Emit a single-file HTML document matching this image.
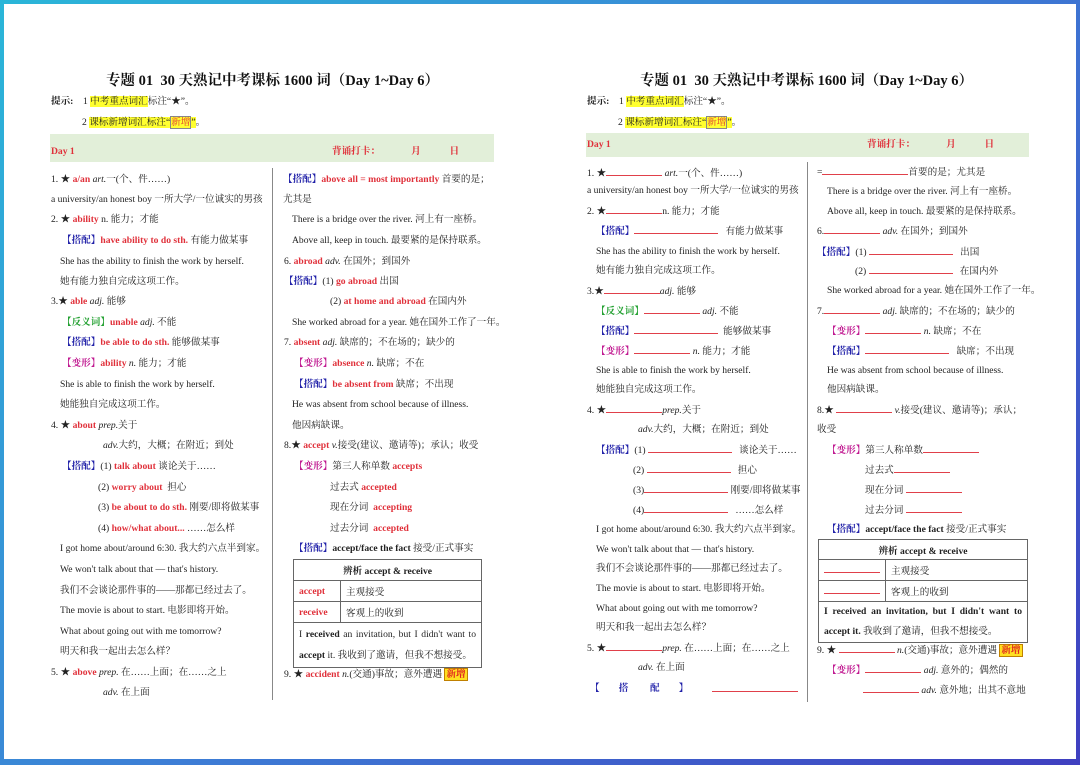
<!DOCTYPE html>
<html><head><meta charset="utf-8"><style>
*{margin:0;padding:0;box-sizing:border-box}
html,body{width:1080px;height:765px;overflow:hidden;background:#fff}
body{position:relative;font-family:"Liberation Serif","Noto Serif CJK SC",serif;font-size:9.6px;color:#222}
.frame{position:absolute;left:0;top:0;width:1080px;height:765px;border:4px solid transparent;border-bottom-width:6px;background:linear-gradient(#fff,#fff) padding-box,linear-gradient(135deg,#2ab6d8,#3d7fd6 50%,#3f3fc0) border-box}
.l{position:absolute;white-space:nowrap;line-height:12px}
.t{position:absolute;font-size:14.5px;font-weight:bold;white-space:nowrap;color:#111}
.r{color:#e0303a;font-weight:bold}
.b{color:#2020a8;font-weight:bold}
.g{color:#22a030;font-weight:bold}
.m{color:#c01890;font-weight:bold}
.k{font-weight:bold}
.hl{background:#ffff30}
.u{display:inline-block;border-bottom:1px solid #e0404a;height:9px;vertical-align:baseline}
.bar{position:absolute;background:#e2efd9}
.vd{position:absolute;width:1px;background:#888}
table{position:absolute;border-collapse:collapse}
td{border:1px solid #666;padding:0 5px;height:21px;font-size:9.6px}
.xin{background:#ffe020;color:#e02020;font-weight:bold;border:1px solid #c08000;padding:0 1px}
</style></head><body>
<div class="frame"></div>

<!-- LEFT PAGE -->
<div class="t" style="left:106px;top:69px">专题 01&nbsp; 30 天熟记中考课标 1600 词（Day 1~Day 6）</div>
<div class="l" style="left:51px;top:96px"><span class="k">提示:</span>&nbsp;&nbsp;&nbsp; 1 <span class="hl">中考重点词汇</span>标注“★”。</div>
<div class="l" style="left:82px;top:117px">2 <span class="hl">课标新增词汇标注“<span style="color:#e03030;border:1px solid #888">新增</span>”</span>。</div>
<div class="bar" style="left:50px;top:134px;width:444px;height:28px"></div>
<div class="l r" style="left:51px;top:146px">Day 1</div>
<div class="l r" style="left:332px;top:146px">背诵打卡：&nbsp;&nbsp;&nbsp;&nbsp;&nbsp;&nbsp;&nbsp;&nbsp;&nbsp;&nbsp;&nbsp;&nbsp;&nbsp;月&nbsp;&nbsp;&nbsp;&nbsp;&nbsp;&nbsp;&nbsp;&nbsp;&nbsp;&nbsp;&nbsp;&nbsp;日</div>
<div class="vd" style="left:272px;top:168px;height:532px"></div>

<div class="l" style="left:51px;top:174px">1. ★ <span class="r">a/an</span> <i>art.</i>一(个、件……)</div>
<div class="l" style="left:51px;top:194px">a university/an honest boy 一所大学/一位诚实的男孩</div>
<div class="l" style="left:51px;top:214px">2. ★ <span class="r">ability</span> n. 能力；才能</div>
<div class="l" style="left:62px;top:235px"><span class="b">【搭配】</span><span class="r">have ability to do sth.</span> 有能力做某事</div>
<div class="l" style="left:60px;top:256px">She has the ability to finish the work by herself.</div>
<div class="l" style="left:60px;top:276px">她有能力独自完成这项工作。</div>
<div class="l" style="left:51px;top:296px">3.★ <span class="r">able</span> <i>adj.</i> 能够</div>
<div class="l" style="left:62px;top:317px"><span class="g">【反义词】</span><span class="r">unable</span> <i>adj.</i> 不能</div>
<div class="l" style="left:62px;top:337px"><span class="b">【搭配】</span><span class="r">be able to do sth.</span> 能够做某事</div>
<div class="l" style="left:62px;top:358px"><span class="m">【变形】</span><span class="r">ability</span> <i>n.</i> 能力；才能</div>
<div class="l" style="left:60px;top:379px">She is able to finish the work by herself.</div>
<div class="l" style="left:60px;top:399px">她能独自完成这项工作。</div>
<div class="l" style="left:51px;top:420px">4. ★ <span class="r">about</span> <i>prep.</i>关于</div>
<div class="l" style="left:103px;top:440px"><i>adv.</i>大约，大概；在附近；到处</div>
<div class="l" style="left:62px;top:461px"><span class="b">【搭配】</span>(1) <span class="r">talk about</span> 谈论关于……</div>
<div class="l" style="left:98px;top:482px">(2) <span class="r">worry about</span>&nbsp; 担心</div>
<div class="l" style="left:98px;top:502px">(3) <span class="r">be about to do sth.</span> 刚要/即将做某事</div>
<div class="l" style="left:98px;top:523px">(4) <span class="r">how/what about...</span> ……怎么样</div>
<div class="l" style="left:60px;top:543px">I got home about/around 6:30. 我大约六点半到家。</div>
<div class="l" style="left:60px;top:564px">We won't talk about that — that's history.</div>
<div class="l" style="left:60px;top:585px">我们不会谈论那件事的——那都已经过去了。</div>
<div class="l" style="left:60px;top:605px">The movie is about to start. 电影即将开始。</div>
<div class="l" style="left:60px;top:626px">What about going out with me tomorrow?</div>
<div class="l" style="left:60px;top:646px">明天和我一起出去怎么样？</div>
<div class="l" style="left:51px;top:667px">5. ★ <span class="r">above</span> <i>prep.</i> 在……上面；在……之上</div>
<div class="l" style="left:103px;top:687px"><i>adv.</i> 在上面</div>

<div class="l" style="left:283px;top:174px"><span class="b">【搭配】</span><span class="r">above all = most importantly</span> 首要的是；</div>
<div class="l" style="left:283px;top:194px">尤其是</div>
<div class="l" style="left:292px;top:214px">There is a bridge over the river. 河上有一座桥。</div>
<div class="l" style="left:292px;top:235px">Above all, keep in touch. 最要紧的是保持联系。</div>
<div class="l" style="left:284px;top:256px">6. <span class="r">abroad</span> <i>adv.</i> 在国外；到国外</div>
<div class="l" style="left:284px;top:276px"><span class="b">【搭配】</span>(1) <span class="r">go abroad</span> 出国</div>
<div class="l" style="left:330px;top:296px">(2) <span class="r">at home and abroad</span> 在国内外</div>
<div class="l" style="left:292px;top:317px">She worked abroad for a year. 她在国外工作了一年。</div>
<div class="l" style="left:284px;top:337px">7. <span class="r">absent</span> <i>adj.</i> 缺席的；不在场的；缺少的</div>
<div class="l" style="left:294px;top:358px"><span class="m">【变形】</span><span class="r">absence</span> <i>n.</i> 缺席；不在</div>
<div class="l" style="left:294px;top:379px"><span class="b">【搭配】</span><span class="r">be absent from</span> 缺席；不出现</div>
<div class="l" style="left:292px;top:399px">He was absent from school because of illness.</div>
<div class="l" style="left:292px;top:420px">他因病缺课。</div>
<div class="l" style="left:284px;top:440px">8.★ <span class="r">accept</span> <i>v.</i>接受(建议、邀请等)；承认；收受</div>
<div class="l" style="left:294px;top:461px"><span class="m">【变形】</span>第三人称单数 <span class="r">accepts</span></div>
<div class="l" style="left:330px;top:482px">过去式 <span class="r">accepted</span></div>
<div class="l" style="left:330px;top:502px">现在分词&nbsp; <span class="r">accepting</span></div>
<div class="l" style="left:330px;top:523px">过去分词&nbsp; <span class="r">accepted</span></div>
<div class="l" style="left:294px;top:543px"><span class="b">【搭配】</span><span class="k">accept/face the fact</span> 接受/正式事实</div>
<table style="left:293px;top:559px;width:189px">
<tr><td colspan="2" style="text-align:center"><b>辨析 accept &amp; receive</b></td></tr>
<tr><td style="width:47px" class="r">accept</td><td>主观接受</td></tr>
<tr><td class="r">receive</td><td>客观上的收到</td></tr>
<tr><td colspan="2" style="height:45px;line-height:21px;text-align:justify;text-align-last:left">I <b>received</b> an invitation, but I didn't want to <b>accept</b> it. 我收到了邀请，但我不想接受。</td></tr>
</table>
<div class="l" style="left:284px;top:669px">9. ★ <span class="r">accident</span> <i>n.</i>(交通)事故；意外遭遇 <span class="xin">新增</span></div>

<!-- RIGHT PAGE -->
<div class="t" style="left:640px;top:69px">专题 01&nbsp; 30 天熟记中考课标 1600 词（Day 1~Day 6）</div>
<div class="l" style="left:587px;top:96px"><span class="k">提示:</span>&nbsp;&nbsp;&nbsp; 1 <span class="hl">中考重点词汇</span>标注“★”。</div>
<div class="l" style="left:618px;top:117px">2 <span class="hl">课标新增词汇标注“<span style="color:#e03030;border:1px solid #888">新增</span>”</span>。</div>
<div class="bar" style="left:586px;top:133px;width:443px;height:24px"></div>
<div class="l r" style="left:587px;top:139px">Day 1</div>
<div class="l r" style="left:867px;top:139px">背诵打卡：&nbsp;&nbsp;&nbsp;&nbsp;&nbsp;&nbsp;&nbsp;&nbsp;&nbsp;&nbsp;&nbsp;&nbsp;&nbsp;月&nbsp;&nbsp;&nbsp;&nbsp;&nbsp;&nbsp;&nbsp;&nbsp;&nbsp;&nbsp;&nbsp;&nbsp;日</div>
<div class="vd" style="left:807px;top:162px;height:540px"></div>

<div class="l" style="left:587px;top:167px">1. ★<span class="u" style="width:56px"></span> <i>art.</i>一(个、件……)</div>
<div class="l" style="left:587px;top:185px">a university/an honest boy 一所大学/一位诚实的男孩</div>
<div class="l" style="left:587px;top:205px">2. ★<span class="u" style="width:56px"></span>n. 能力；才能</div>
<div class="l" style="left:596px;top:225px"><span class="b">【搭配】</span><span class="u" style="width:84px"></span>&nbsp;&nbsp; 有能力做某事</div>
<div class="l" style="left:596px;top:246px">She has the ability to finish the work by herself.</div>
<div class="l" style="left:596px;top:265px">她有能力独自完成这项工作。</div>
<div class="l" style="left:587px;top:285px">3.★<span class="u" style="width:56px"></span><i>adj.</i> 能够</div>
<div class="l" style="left:596px;top:305px"><span class="g">【反义词】</span><span class="u" style="width:56px"></span> <i>adj.</i> 不能</div>
<div class="l" style="left:596px;top:325px"><span class="b">【搭配】</span><span class="u" style="width:84px"></span>&nbsp; 能够做某事</div>
<div class="l" style="left:596px;top:345px"><span class="m">【变形】</span><span class="u" style="width:56px"></span> <i>n.</i> 能力；才能</div>
<div class="l" style="left:596px;top:365px">She is able to finish the work by herself.</div>
<div class="l" style="left:596px;top:384px">她能独自完成这项工作。</div>
<div class="l" style="left:587px;top:404px">4. ★<span class="u" style="width:56px"></span><i>prep.</i>关于</div>
<div class="l" style="left:638px;top:424px"><i>adv.</i>大约，大概；在附近；到处</div>
<div class="l" style="left:596px;top:444px"><span class="b">【搭配】</span>(1) <span class="u" style="width:84px"></span>&nbsp;&nbsp; 谈论关于……</div>
<div class="l" style="left:633px;top:464px">(2) <span class="u" style="width:84px"></span>&nbsp;&nbsp; 担心</div>
<div class="l" style="left:633px;top:484px">(3)<span class="u" style="width:84px"></span> 刚要/即将做某事</div>
<div class="l" style="left:633px;top:504px">(4)<span class="u" style="width:84px"></span>&nbsp;&nbsp; ……怎么样</div>
<div class="l" style="left:596px;top:524px">I got home about/around 6:30. 我大约六点半到家。</div>
<div class="l" style="left:596px;top:544px">We won't talk about that — that's history.</div>
<div class="l" style="left:596px;top:563px">我们不会谈论那件事的——那都已经过去了。</div>
<div class="l" style="left:596px;top:583px">The movie is about to start. 电影即将开始。</div>
<div class="l" style="left:596px;top:603px">What about going out with me tomorrow?</div>
<div class="l" style="left:596px;top:622px">明天和我一起出去怎么样？</div>
<div class="l" style="left:587px;top:642px">5. ★<span class="u" style="width:56px"></span><i>prep.</i> 在……上面；在……之上</div>
<div class="l" style="left:638px;top:662px"><i>adv.</i> 在上面</div>
<div class="l b" style="left:590px;top:683px">【&nbsp;&nbsp;&nbsp;&nbsp;&nbsp;&nbsp;&nbsp;&nbsp;搭&nbsp;&nbsp;&nbsp;&nbsp;&nbsp;&nbsp;&nbsp;&nbsp;&nbsp;配&nbsp;&nbsp;&nbsp;&nbsp;&nbsp;&nbsp;&nbsp;&nbsp;】</div>
<div class="l" style="left:712px;top:683px"><span class="u" style="width:86px"></span></div>

<div class="l" style="left:817px;top:166px">=<span class="u" style="width:86px"></span>首要的是；尤其是</div>
<div class="l" style="left:827px;top:186px">There is a bridge over the river. 河上有一座桥。</div>
<div class="l" style="left:827px;top:206px">Above all, keep in touch. 最要紧的是保持联系。</div>
<div class="l" style="left:817px;top:225px">6.<span class="u" style="width:56px"></span> <i>adv.</i> 在国外；到国外</div>
<div class="l" style="left:817px;top:246px"><span class="b">【搭配】</span>(1) <span class="u" style="width:84px"></span>&nbsp;&nbsp; 出国</div>
<div class="l" style="left:855px;top:265px">(2) <span class="u" style="width:84px"></span>&nbsp;&nbsp; 在国内外</div>
<div class="l" style="left:827px;top:285px">She worked abroad for a year. 她在国外工作了一年。</div>
<div class="l" style="left:817px;top:305px">7.<span class="u" style="width:56px"></span> <i>adj.</i> 缺席的；不在场的；缺少的</div>
<div class="l" style="left:827px;top:325px"><span class="m">【变形】</span><span class="u" style="width:56px"></span> <i>n.</i> 缺席；不在</div>
<div class="l" style="left:827px;top:345px"><span class="b">【搭配】</span><span class="u" style="width:84px"></span>&nbsp;&nbsp; 缺席；不出现</div>
<div class="l" style="left:827px;top:365px">He was absent from school because of illness.</div>
<div class="l" style="left:827px;top:384px">他因病缺课。</div>
<div class="l" style="left:817px;top:404px">8.★ <span class="u" style="width:56px"></span> <i>v.</i>接受(建议、邀请等)；承认；</div>
<div class="l" style="left:817px;top:424px">收受</div>
<div class="l" style="left:827px;top:444px"><span class="m">【变形】</span>第三人称单数<span class="u" style="width:56px"></span></div>
<div class="l" style="left:865px;top:464px">过去式<span class="u" style="width:56px"></span></div>
<div class="l" style="left:865px;top:484px">现在分词 <span class="u" style="width:56px"></span></div>
<div class="l" style="left:865px;top:504px">过去分词 <span class="u" style="width:56px"></span></div>
<div class="l" style="left:827px;top:524px"><span class="b">【搭配】</span><span class="k">accept/face the fact</span> 接受/正式事实</div>
<table style="left:818px;top:539px;width:210px">
<tr><td colspan="2" style="text-align:center;height:20px"><b>辨析 accept &amp; receive</b></td></tr>
<tr><td style="width:67px;height:20px"><span class="u" style="width:56px"></span></td><td>主观接受</td></tr>
<tr><td style="height:20px"><span class="u" style="width:56px"></span></td><td>客观上的收到</td></tr>
<tr><td colspan="2" style="height:40px;line-height:20px;text-align:justify;text-align-last:left;font-weight:bold">I received an invitation, but I didn't want to accept it. <span style="font-weight:normal">我收到了邀请，但我不想接受。</span></td></tr>
</table>
<div class="l" style="left:817px;top:644px">9. ★ <span class="u" style="width:56px"></span> <i>n.</i>(交通)事故；意外遭遇 <span class="xin">新增</span></div>
<div class="l" style="left:827px;top:664px"><span class="m">【变形】</span><span class="u" style="width:56px"></span> <i>adj.</i> 意外的；偶然的</div>
<div class="l" style="left:863px;top:684px"><span class="u" style="width:56px"></span> <i>adv.</i> 意外地；出其不意地</div>
</body></html>
